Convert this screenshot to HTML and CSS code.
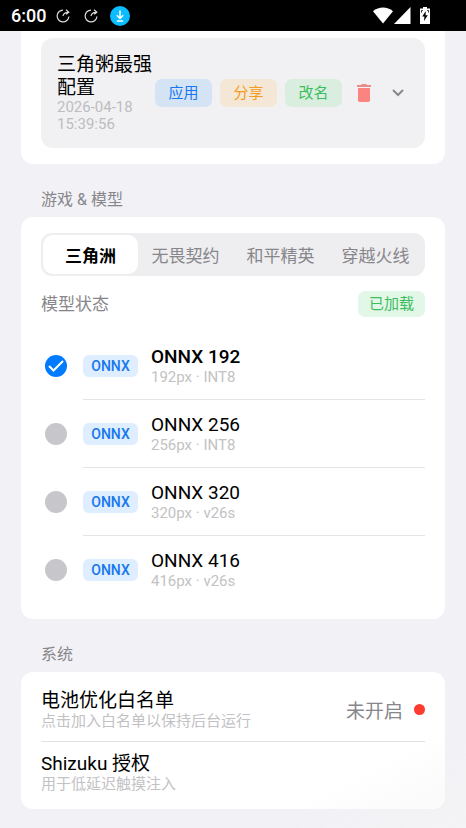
FILE: index.html
```html
<!DOCTYPE html>
<html lang="zh-CN">
<head>
<meta charset="utf-8">
<meta name="viewport" content="width=device-width, initial-scale=1">
<title>游戏 &amp; 模型</title>
<link rel="stylesheet" href="styles.css">
</head>
<body>
<header class="statusbar">
  <span class="time">6:00</span>
  <svg class="sync" viewBox="0 0 14 14" aria-hidden="true"><path d="M7 1.100A5.900 5.900 0 1 0 12.900 7.500"/><path d="M7 7Q7.500 3.500 12 3.300M10 .8l2.800 2.400-2.600 2.200"/></svg>
  <svg class="sync" viewBox="0 0 14 14" aria-hidden="true"><path d="M7 1.100A5.900 5.900 0 1 0 12.900 7.500"/><path d="M7 7Q7.500 3.500 12 3.300M10 .8l2.800 2.400-2.600 2.200"/></svg>
  <svg class="download" viewBox="0 0 20 20" aria-hidden="true"><circle cx="10" cy="10" r="10" fill="#0bbcff"/><path d="M10 4.500v8M6.800 9.300 10 12.500l3.200-3.200M6.800 15h6.400" fill="none" stroke="#fff" stroke-width="1.500"/></svg>
  <span class="signals">
    <svg width="20" height="17" viewBox="0 0 20 17" aria-hidden="true"><path d="M0 4.200C5.800-.8 14.200-.8 20 4.200L10 16.500z" fill="#fff"/></svg>
    <svg width="17" height="17" viewBox="0 0 17 17" aria-hidden="true"><path d="M0 17 16.500 0v17z" fill="#fff"/></svg>
    <svg class="battery" width="10" height="17" viewBox="0 0 10 17" aria-hidden="true"><path d="M3 0h4v1.500h3V17H0V1.500h3z" fill="#fff"/><path d="M5.800 4 2.200 9.600h2.200L4 14l3.800-5.800H5.500z" fill="#000"/><path d="M1.500 5.500v-2h1.300M8.500 5.500v-2H7.200" stroke="#000" fill="none" stroke-width=".8"/></svg>
  </span>
</header>
<main class="page">
  <section class="card card-continued">
    <article class="profile">
      <div class="profile-info">
        <h3 class="title">三角粥最强配置</h3>
        <time class="date">2026-04-18 15:39:56</time>
      </div>
      <div class="actions">
        <button class="action apply" type="button">应用</button>
        <button class="action share" type="button">分享</button>
        <button class="action rename" type="button">改名</button>
      </div>
      <button class="icon-button trash" type="button" aria-label="删除"><svg width="14" height="18" viewBox="0 0 14 18"><path d="M0 1h4l1-1h4l1 1h4v2H0z" fill="#e98c89"/><path d="M1 4h12v12.200q0 1.800-1.800 1.800H2.800Q1 18 1 16.200z" fill="#fb8480"/></svg></button>
      <button class="icon-button more" type="button" aria-label="展开"><svg width="12" height="8" viewBox="0 0 12 8"><path d="m1 1 5 5 5-5" fill="none" stroke="#88888c" stroke-width="2"/></svg></button>
    </article>
  </section>

  <h2 class="section-label">游戏 &amp; 模型</h2>
  <section class="card models">
    <div class="tabs" role="tablist">
      <button class="tab selected" type="button" role="tab" aria-selected="true">三角洲</button>
      <button class="tab" type="button" role="tab" aria-selected="false">无畏契约</button>
      <button class="tab" type="button" role="tab" aria-selected="false">和平精英</button>
      <button class="tab" type="button" role="tab" aria-selected="false">穿越火线</button>
    </div>
    <div class="model-status">
      <span>模型状态</span>
      <span class="loaded">已加载</span>
    </div>
    <div class="model-list">
      <label class="model">
        <span class="check"><input type="radio" name="model" checked><svg viewBox="0 0 22 22" aria-hidden="true"><path d="m4 11 4.500 4.500L18 6"/></svg></span>
        <span class="model-body"><span class="tag">ONNX</span><span class="text"><span class="title">ONNX 192</span><span class="sub">192px · INT8</span></span></span>
      </label>
      <label class="model">
        <span class="check"><input type="radio" name="model"></span>
        <span class="model-body"><span class="tag">ONNX</span><span class="text"><span class="title">ONNX 256</span><span class="sub">256px · INT8</span></span></span>
      </label>
      <label class="model">
        <span class="check"><input type="radio" name="model"></span>
        <span class="model-body"><span class="tag">ONNX</span><span class="text"><span class="title">ONNX 320</span><span class="sub">320px · v26s</span></span></span>
      </label>
      <label class="model">
        <span class="check"><input type="radio" name="model"></span>
        <span class="model-body"><span class="tag">ONNX</span><span class="text"><span class="title">ONNX 416</span><span class="sub">416px · v26s</span></span></span>
      </label>
    </div>
  </section>

  <h2 class="section-label">系统</h2>
  <section class="card system">
    <div class="setting">
      <div class="text"><span class="title">电池优化白名单</span><span class="sub">点击加入白名单以保持后台运行</span></div>
      <span class="state">未开启<i class="dot"></i></span>
    </div>
    <div class="setting">
      <div class="text"><span class="title">Shizuku 授权</span><span class="sub">用于低延迟触摸注入</span></div>
    </div>
  </section>
</main>
<div class="haze" aria-hidden="true"></div>
</body>
</html>
```
FILE: styles.css
```css
* {
  box-sizing: border-box;
}

body {
  margin: 0;
  min-height: 100vh;
  background: #f2f1f6;
  color: #000;
  font-family: Roboto, "Noto Sans CJK SC", sans-serif;
  font-size: 16px;
  overflow-x: hidden;
}

button {
  margin: 0;
  padding: 0;
  border: 0;
  background: none;
  font: inherit;
}

svg {
  display: block;
}

h2,
h3 {
  margin: 0;
  font-weight: 400;
}

.statusbar {
  display: flex;
  align-items: center;
  height: 31px;
  padding: 0 36px 0 11px;
  background: #000;
  color: #fff;
}

.time {
  margin-right: 10px;
  font-size: 18px;
  font-weight: 500;
}

.sync {
  width: 14px;
  height: 14px;
  margin-right: 14px;
  fill: none;
  stroke: #ddd;
  stroke-width: 1.2;
}

.download {
  width: 20px;
  height: 20px;
  margin-left: -2px;
}

.signals {
  display: flex;
  gap: 1px;
  margin-left: auto;
}

.battery {
  margin-left: 8px;
}

.page {
  padding: 0 21px 19px;
}

.card {
  padding: 16px 20px;
  border-radius: 12px;
  background: #fff;
}

.card-continued {
  padding-top: 7px;
  border-radius: 0 0 12px 12px;
}

.profile {
  display: flex;
  align-items: center;
  height: 110px;
  padding: 0 21px 0 16px;
  border-radius: 12px;
  background: #f1f1f3;
}

.profile-info {
  flex: 1;
  min-width: 0;
}

.title {
  display: block;
  font-size: 19px;
  line-height: 23px;
}

.date {
  display: block;
  width: 80px;
  color: #bdbdc0;
  font-size: 15px;
  line-height: 17px;
}

.actions {
  display: flex;
  gap: 8px;
}

.action {
  width: 57px;
  height: 28px;
  border-radius: 7px;
  font-size: 15px;
  line-height: 28px;
}

.apply {
  background: #d4e4f5;
  color: #1677ee;
}

.share {
  background: #f4e7d5;
  color: #f49a20;
}

.rename {
  background: #daeee0;
  color: #3cbd60;
}

.trash {
  margin-left: 15px;
}

.more {
  margin-left: 21px;
}

.section-label {
  padding: 24px 20px 6px;
  color: #87878b;
  font-size: 16px;
  line-height: 23px;
}

.tabs {
  display: grid;
  grid-template-columns: repeat(4, 1fr);
  height: 43px;
  padding: 2px;
  border-radius: 11px;
  background: #eeeef0;
}

.tab {
  border-radius: 10px;
  color: #87878b;
  font-size: 17px;
}

.tab.selected {
  background: #fff;
  color: #000;
  font-weight: 700;
}

.model-status {
  display: flex;
  align-items: center;
  justify-content: space-between;
  height: 26px;
  margin: 15px 0;
  color: #87878b;
  font-size: 17px;
  line-height: 24px;
}

.loaded {
  padding: 0 11px;
  border-radius: 7px;
  background: #e3f7e8;
  color: #3cbd60;
  font-size: 15px;
  line-height: 26px;
}

.model {
  display: flex;
  align-items: center;
}

.check {
  display: grid;
  width: 22px;
  height: 22px;
  margin: 0 16px 0 4px;
}

.check > * {
  grid-area: 1 / 1;
}

.check input {
  width: 22px;
  height: 22px;
  margin: 0;
  appearance: none;
  border-radius: 50%;
  background: #c7c6cb;
}

.check input:checked {
  background: #007aff;
}

.check svg {
  z-index: 1;
  fill: none;
  stroke: #fff;
  stroke-width: 2;
}

.model-body {
  display: flex;
  flex: 1;
  align-items: center;
  gap: 13px;
  height: 68px;
  border-bottom: 1px solid #e5e5e7;
}

.model:last-child .model-body {
  height: 67px;
  border-bottom: 0;
}

.tag {
  width: 55px;
  border-radius: 6px;
  background: #deeeff;
  color: #1677ee;
  font-size: 14px;
  font-weight: 500;
  line-height: 22px;
  text-align: center;
}

.model:first-child .title {
  font-weight: 500;
}

.sub {
  display: block;
  color: #c2c2c4;
  font-size: 15px;
  line-height: 19px;
}

.system {
  padding-top: 6px;
  padding-bottom: 6px;
}

.setting {
  display: flex;
  align-items: center;
  justify-content: space-between;
  height: 63px;
}

.setting + .setting {
  height: 62px;
  border-top: 1px solid #e2e2e4;
}

.state {
  display: flex;
  align-items: center;
  gap: 11px;
  color: #87878b;
  font-size: 19px;
}

.dot {
  width: 11px;
  height: 11px;
  border-radius: 50%;
  background: #ff3b30;
}

.haze {
  position: fixed;
  right: 0;
  bottom: 0;
  width: 170px;
  height: 86px;
  background: linear-gradient(to bottom right, transparent 35%, rgba(244, 244, 244, 0.6));
  pointer-events: none;
}
```
